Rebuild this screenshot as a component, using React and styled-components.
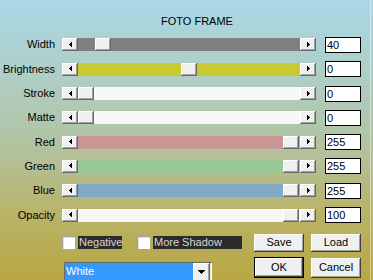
import React from 'react';
import styled, { createGlobalStyle } from 'styled-components';

const Global = createGlobalStyle`
  html, body { margin: 0; padding: 0; }
  body { width: 373px; height: 280px; overflow: hidden; }
`;

const Window = styled.div`
  width: 373px;
  height: 280px;
  box-sizing: border-box;
  padding-top: 14.5px;
  overflow: hidden;
  font-family: "Liberation Sans", Arial, sans-serif;
  font-size: 11px;
  color: #000;
  background:
    linear-gradient(to right, transparent 370px, rgba(255,255,255,0.45) 370px, rgba(255,255,255,0.45) 371px, transparent 371px),
    linear-gradient(to bottom, #a9d8e7 0%, #aed0cc 22%, #b1c6ac 45%, #b4bf94 58%, #b8b46a 75%, #b9a743 100%);
`;

const Title = styled.div`
  line-height: 13px;
  padding-left: 161px;
  margin-bottom: 5.35px;
  white-space: nowrap;
`;

const SliderList = styled.div`
  display: flex;
  flex-direction: column;
`;

const Row = styled.div`
  display: flex;
  align-items: center;
  height: 24.3px;
`;

const Label = styled.div`
  width: 55px;
  margin-right: 7px;
  text-align: right;
  line-height: 13px;
  white-space: nowrap;
`;

const Scrollbar = styled.div`
  display: flex;
  width: 254px;
  height: 13px;
`;

const raised = `
  background: #f0f0f0;
  box-shadow: inset -1px -1px #696969, inset 1px 1px #fff, inset -2px -2px #a0a0a0;
`;

const ArrowButton = styled.div`
  width: 16px;
  height: 13px;
  flex: none;
  ${raised}
  display: flex;
  align-items: center;
  justify-content: center;
  svg { display: block; margin-top: -1px; }
`;

const Track = styled.div`
  flex: 1;
  position: relative;
  background: ${p => p.$color || 'repeating-conic-gradient(#efefef 0% 25%, #ffffff 0% 50%) 0 0 / 2px 2px'};
`;

const Thumb = styled.div`
  position: absolute;
  top: 0;
  width: 16px;
  height: 13px;
  ${raised}
`;

const ValueBox = styled.div`
  margin-left: 9px;
  width: 36px;
  height: 16px;
  box-sizing: border-box;
  border: 1px solid #000;
  background: #fff;
  padding-left: 1px;
  line-height: 14px;
`;

const ControlRow = styled.div`
  display: flex;
  align-items: center;
  height: 18px;
  margin-top: 6.75px;
  padding-left: 62px;
`;

const Checkbox = styled.div`
  width: 13px;
  height: 13px;
  flex: none;
  box-sizing: border-box;
  background: #fff;
  margin-left: ${p => p.$gap || 0}px;
  margin-right: 3px;
  box-shadow: inset 1px 1px #a0a0a0, inset 2px 2px #e3e3e3, inset -1px -1px #fff;
`;

const CheckLabel = styled.div`
  width: ${p => p.$width}px;
  height: 13px;
  box-sizing: border-box;
  padding-left: 1px;
  line-height: 13px;
  background: #2b2b2b;
  color: #d6d6d6;
  white-space: nowrap;
`;

const PushButton = styled.div`
  width: 50px;
  height: ${p => p.$h || 18}px;
  box-sizing: border-box;
  flex: none;
  margin-left: ${p => p.$gap || 0}px;
  margin-top: ${p => p.$top || 0}px;
  display: flex;
  align-items: center;
  justify-content: center;
  ${raised}
  box-shadow: inset -1px -1px #404040, inset 1px 1px #fff, inset -2px -2px #a0a0a0;
  ${p => p.$default && 'border: 1px solid #000;'}
  line-height: 13px;
`;

const BottomRow = styled.div`
  display: flex;
  align-items: flex-start;
  margin-top: 5px;
  padding-left: 63px;
`;

const Dropdown = styled.div`
  display: flex;
  width: 149px;
  height: 24px;
  margin-top: 4px;
  box-sizing: border-box;
  padding: 2px;
  background: #fff;
  box-shadow: inset 1px 1px #a0a0a0, inset 2px 2px #696969, inset -1px -1px #fff, inset -2px -2px #e3e3e3;
`;

const Field = styled.div`
  flex: 1;
  background: #3399ff;
  color: #fff;
  padding-left: 1px;
  padding-top: 2.4px;
  line-height: 13px;
`;

const DropButton = styled.div`
  width: 17px;
  flex: none;
  ${raised}
  display: flex;
  justify-content: center;
  padding-top: 7px;
  box-sizing: border-box;
  svg { display: block; }
`;

const LeftArrow = () => (
  <svg width="3" height="5" shapeRendering="crispEdges">
    <rect x="0" y="2" width="1" height="1" fill="#000" />
    <rect x="1" y="1" width="1" height="3" fill="#000" />
    <rect x="2" y="0" width="1" height="5" fill="#000" />
  </svg>
);

const RightArrow = () => (
  <svg width="3" height="5" shapeRendering="crispEdges">
    <rect x="0" y="0" width="1" height="5" fill="#000" />
    <rect x="1" y="1" width="1" height="3" fill="#000" />
    <rect x="2" y="2" width="1" height="1" fill="#000" />
  </svg>
);

const DownArrow = () => (
  <svg width="7" height="4" shapeRendering="crispEdges">
    <rect x="0" y="0" width="7" height="1" fill="#000" />
    <rect x="1" y="1" width="5" height="1" fill="#000" />
    <rect x="2" y="2" width="3" height="1" fill="#000" />
    <rect x="3" y="3" width="1" height="1" fill="#000" />
  </svg>
);

const sliders = [
  { label: 'Width', value: '40', color: '#808080', pos: 17 },
  { label: 'Brightness', value: '0', color: '#c9c932', pos: 103 },
  { label: 'Stroke', value: '0', color: null, pos: 0 },
  { label: 'Matte', value: '0', color: null, pos: 0 },
  { label: 'Red', value: '255', color: '#c99696', pos: 205 },
  { label: 'Green', value: '255', color: '#96c996', pos: 205 },
  { label: 'Blue', value: '255', color: '#7fa8c9', pos: 205 },
  { label: 'Opacity', value: '100', color: null, pos: 205 },
];

export default function App() {
  return (
    <>
      <Global />
      <Window>
        <Title>FOTO FRAME</Title>
        <SliderList>
          {sliders.map(s => (
            <Row key={s.label}>
              <Label>{s.label}</Label>
              <Scrollbar>
                <ArrowButton><LeftArrow /></ArrowButton>
                <Track $color={s.color}>
                  <Thumb style={{ left: s.pos }} />
                </Track>
                <ArrowButton><RightArrow /></ArrowButton>
              </Scrollbar>
              <ValueBox>{s.value}</ValueBox>
            </Row>
          ))}
        </SliderList>
        <ControlRow>
          <Checkbox />
          <CheckLabel $width={44}>Negative</CheckLabel>
          <Checkbox $gap={15} />
          <CheckLabel $width={89}>More Shadow</CheckLabel>
          <PushButton $gap={12}>Save</PushButton>
          <PushButton $gap={7}>Load</PushButton>
        </ControlRow>
        <BottomRow>
          <Dropdown>
            <Field>White</Field>
            <DropButton><DownArrow /></DropButton>
          </Dropdown>
          <PushButton $gap={42} $h={21} $default>OK</PushButton>
          <PushButton $gap={7} $h={20} $top={1}>Cancel</PushButton>
        </BottomRow>
      </Window>
    </>
  );
}
